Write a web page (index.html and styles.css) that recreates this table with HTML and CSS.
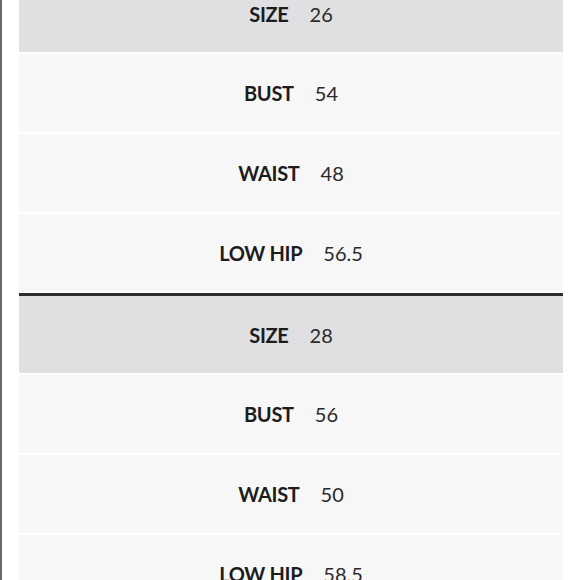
FILE: index.html
```html
<!DOCTYPE html>
<html>
<head>
<meta charset="utf-8">
<link rel="stylesheet" href="styles.css">
</head>
<body>
<div class="page">
  <div class="chart">
    <div class="block first">
      <div class="row head"><span class="label">SIZE</span><span class="value">26</span></div>
      <div class="row"><span class="label">BUST</span><span class="value">54</span></div>
      <div class="row"><span class="label">WAIST</span><span class="value">48</span></div>
      <div class="row"><span class="label">LOW HIP</span><span class="value">56.5</span></div>
    </div>
    <div class="block next">
      <div class="row head"><span class="label">SIZE</span><span class="value">28</span></div>
      <div class="row"><span class="label">BUST</span><span class="value">56</span></div>
      <div class="row"><span class="label">WAIST</span><span class="value">50</span></div>
      <div class="row"><span class="label">LOW HIP</span><span class="value">58.5</span></div>
    </div>
  </div>
</div>
</body>
</html>
```
FILE: styles.css
```css
html, body {
  margin: 0;
  padding: 0;
  background: #ffffff;
  height: 100%;
  overflow: hidden;
}
.page {
  height: 580px;
  border-left: 2px solid #6a6a6a;
  box-sizing: border-box;
  overflow: hidden;
}
.chart {
  margin-left: 17px;
  width: 544px;
  margin-top: -25px;
}
.block {
  display: flex;
  flex-direction: column;
  gap: 2px;
}
.block.next {
  margin-top: 1px;
  border-top: 3px solid #2e2e2e;
}
.row {
  height: 78px;
  background: #f7f7f7;
  display: flex;
  align-items: center;
  justify-content: center;
  gap: 21px;
  font-family: Lato, "Liberation Sans", sans-serif;
  font-size: 20px;
  color: #1c1c1c;
}
.row.head {
  height: 77px;
  background: #e0e0e2;
}
.label {
  font-weight: 700;
  letter-spacing: -0.3px;
}
.value {
  font-weight: 400;
  color: #2a2a2a;
}
```
